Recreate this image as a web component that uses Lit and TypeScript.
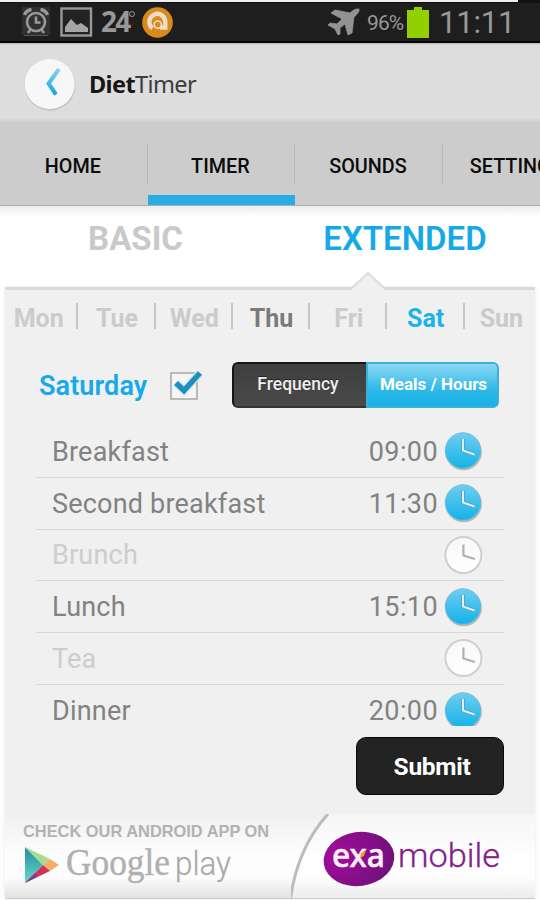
import { LitElement, html, css, svg } from "lit";
import { customElement, property } from "lit/decorators.js";
import { classMap } from "lit/directives/class-map.js";

@customElement("clock-icon")
class ClockIcon extends LitElement {
  @property({ type: Boolean }) on = false;

  static styles = css`
    :host { display: block; width: 42px; height: 42px; }
    svg { display: block; }
  `;

  render() {
    return html`<svg width="42" height="42" viewBox="0 0 42 42" fill="none">
      <defs>
        <linearGradient id="face" x1="0" y1="0" x2="0" y2="1">
          <stop offset="0" stop-color="#70cdf0" />
          <stop offset="1" stop-color="#14b2ea" />
        </linearGradient>
        <linearGradient id="blank" x1="0" y1="0" x2="0" y2="1">
          <stop offset="0" stop-color="#f8f8f8" />
          <stop offset="1" stop-color="#fff" />
        </linearGradient>
      </defs>
      ${this.on
        ? svg`<circle cx="21.6" cy="22" r="18.3" fill="#aaa" opacity=".8" />
            <circle cx="21" cy="20.5" r="17.8" fill="url(#face)" stroke="#6fbcd6" stroke-width=".8" />
            <path d="M21 9V20.5L32.5 24.5" stroke="#4fa9ca" stroke-width="4.2" />
            <path d="M21 9V20.5L32.5 24.5" stroke="#dceff7" stroke-width="2" />`
        : svg`<circle cx="21.4" cy="21" r="18" fill="url(#blank)" stroke="#cfcfcf" stroke-width="2" />
            <path d="M21.4 10.5V21.5L33 25" stroke="#b0b0b0" stroke-width="2.2" />`}
    </svg>`;
  }
}

interface Meal { name: string; time?: string }

const MEALS: Meal[] = [
  { name: "Breakfast", time: "09:00" },
  { name: "Second breakfast", time: "11:30" },
  { name: "Brunch" },
  { name: "Lunch", time: "15:10" },
  { name: "Tea" },
  { name: "Dinner", time: "20:00" },
];
const DAYS = ["Mon", "Tue", "Wed", "Thu", "Fri", "Sat", "Sun"];
const TABS = ["HOME", "TIMER", "SOUNDS", "SETTINGS"];

@customElement("app-root")
class AppRoot extends LitElement {
  static styles = css`
    :host {
      display: flex; flex-direction: column; width: 540px; height: 900px; overflow: hidden;
      background: #fdfdfd; font-family: Roboto, "Liberation Sans", sans-serif; white-space: nowrap;
    }
    * { box-sizing: border-box; }
    svg { display: block; flex: none; }

    .strip { height: 3px; flex: none; background: #111; }
    .strip i { display: block; width: 518px; height: 2px; background: #eee; }
    .status {
      height: 40px; flex: none; display: flex; align-items: center; padding: 0 29px 0 22px;
      background: #1e1e1e; border-bottom: 2px solid #050505; color: #989898;
    }
    .temp {
      display: flex; font: 700 28px/38px "Open Sans", sans-serif; letter-spacing: -1.8px;
      margin: -2px 0 0 8px; width: 41px;
    }
    .temp i { width: 6px; height: 6px; margin: 9px 0 0 0; border: 1.5px solid #989898; border-radius: 50%; }
    .spacer { flex: 1; }
    .percent { font-size: 21px; margin: 1px 3px 0 7px; width: 37px; letter-spacing: -.9px; }
    .time { font-size: 31px; width: 72px; margin-left: 10px; letter-spacing: -.2px; }

    .header {
      height: 79px; flex: none; display: flex; align-items: center; padding: 4px 0 0 23px;
      background: linear-gradient(#b5b5b5, #ddd 2px, #ddd 75px, #cfcfcf);
    }
    .brand { font: 23.5px/30px "Noto Sans", sans-serif; color: #161616; margin: -2px 0 0 13px; letter-spacing: -.6px; }
    .brand span { color: #3c3c3c; }

    .tabs {
      height: 84px; flex: none; display: flex; overflow: hidden; background: #ccc;
      border-bottom: 1px solid #adadad;
    }
    .tab {
      width: 147.6px; flex: none; font-weight: 500; font-size: 19.8px; line-height: 89px; text-align: center;
      color: #0c0c0c; background: linear-gradient(#b9b9b9, #b9b9b9) right 22px / 1px 41px no-repeat;
      padding-right: 2px;
    }
    .tab.on { box-shadow: inset 0 -10px #27ade2; }
    .tab:last-child { text-align: left; padding-left: 27px; }

    .modes {
      height: 81px; flex: none; display: grid; grid-template-columns: 271px 269px; text-align: center;
      background: linear-gradient(#ececec, #fff 10px); font-size: 33px; line-height: 65px;
      font-weight: 700; color: #c9c9c9;
    }
    .mode.on { color: #17a9e6; font-weight: 600; letter-spacing: 0; padding-right: 1px; }

    .panel {
      position: relative; flex: 1; margin: 0 5px 1px; display: flex; flex-direction: column;
      background: #f0f0f0; border-top: 3px solid #dadada; border-bottom: 1px solid #ccc;
      box-shadow: 0 0 3px #e8e8e8;
    }
    .pointer { position: absolute; left: 346px; top: -18px; }

    .days { display: grid; grid-template-columns: repeat(7, 77.3px); margin: 0 -5px; height: 60px; padding: 13px 0 0 1px; }
    .day {
      height: 30px; line-height: 31px; font-size: 25px; font-weight: 700; text-align: center; color: #cbcbcb;
      background: linear-gradient(#c6c6c6, #c6c6c6) right 0 / 2px 26px no-repeat;
    }
    .day:first-child { padding-right: 2px; }
    .day:last-child { background: none; padding-right: 4px; }
    .day.today { color: #7a7a7a; }
    .day.on { color: #1bb3e8; padding-right: 1px; }

    .controls { display: flex; align-items: center; height: 72px; padding-left: 34px; }
    .dayname { font-size: 27px; font-weight: 600; color: #17a9ea; width: 128px; letter-spacing: .1px; }
    .toggle {
      display: flex; width: 267px; height: 46px; margin: -2px 0 0 26px; font-size: 17.5px; font-weight: 500;
      line-height: 40px; text-align: center; color: #eee; border-radius: 5px; text-shadow: 0 -1px #222;
    }
    .seg {
      width: 134px; border: 2px solid #161616; border-bottom-color: #333; border-right: 0; padding-right: 4px;
      border-radius: 6px 0 0 6px; background: linear-gradient(#3e3e3e, #4a4a4a);
    }
    .seg.on {
      width: 133px; padding: 0 0 0 2px; border: 2px solid #39b1db; border-radius: 0 6px 6px 0; color: #fff;
      font-weight: 700; font-size: 17px; background: linear-gradient(#8bd8f3, #2bb7e8 65%, #17b1e6); text-shadow: none;
    }

    .list { margin: 4px 31px 0; height: 312px; }
    .meal {
      display: flex; align-items: center; height: 51.75px; padding: 0 20px 0 16px;
      border-bottom: 1px solid #d8d8d8; color: #828282; font-size: 27px;
    }
    .meal:last-child { border: 0; }
    .meal.off { color: #cdcdcd; }
    .name { flex: 1; letter-spacing: .2px; padding-top: 1px; }
    .clock { margin-left: 4px; height: 42px; overflow: hidden; }
    .meal:last-child .clock { height: 36px; margin-top: -6px; }
    .hour { letter-spacing: .4px; padding-top: 1px; }

    .submit {
      align-self: flex-end; margin: -1px 31px 0 0; width: 148px; height: 58px; border-radius: 10px;
      background: #232323; border: 1px solid #080808; color: #fff; font-weight: 700; font-size: 24.5px;
      line-height: 58px; text-align: center; padding-left: 4px; letter-spacing: -.3px;
    }

    .footer {
      position: relative; display: flex; margin-top: auto; height: 84px;
      background: linear-gradient(#f0f0f0, #fdfdfd 50%, #fdfdfd 75%, #e2e2e2);
    }
    .play { width: 286px; padding: 8px 0 0 18px; }
    .check { font: 700 16.4px/18px "Liberation Sans", sans-serif; color: #b2b2b2; letter-spacing: 0; }
    .store { display: flex; height: 52px; margin-top: 2px; }
  `;

  render() {
    return html`
      <div class="strip"><i></i></div>
      <div class="status">
        <svg width="28" height="30" viewBox="0 0 28 30" fill="none" stroke="#999" stroke-width="2.6">
          <rect width="28" height="28" fill="#303030" stroke="none" />
          <circle cx="14" cy="15" r="9" /><path d="M14 9.5V15.5H18.5M8.5 22.5L6 26M19.5 22.5L22 26" />
          <path d="M2.5 8Q4 3.5 9.5 2.5M18.5 2.5Q24 3.5 25.5 8" stroke-width="3.4" /><path d="M2 28.5H26" stroke="#555" stroke-width="1" />
        </svg>
        <svg width="33" height="30" viewBox="0 0 33 30" style="margin-left:10px">
          <rect x="1.5" y="1.5" width="29.5" height="27" fill="#222" stroke="#999" stroke-width="2.4" />
          <path d="M5 25V20L11 12L17 18L21 16L28 21V25Z" fill="#a5a5a5" />
        </svg>
        <div class="temp">24<i></i></div>
        <svg width="31" height="31" viewBox="0 0 31 31">
          <circle cx="15.5" cy="15.5" r="15.3" fill="#d98a18" />
          <path d="M10.5 21.3A8 8 0 1 1 23.3 15.5V20.5H18" fill="none" stroke="#e9dfca" stroke-width="4.4" />
          <circle cx="15.8" cy="17.6" r="3.6" fill="#d98a18" stroke="#e9dfca" stroke-width="1.6" />
        </svg>
        <div class="spacer"></div>
        <svg width="32" height="28" viewBox="0 0 32 28" fill="#929292">
          <path d="M31 1Q27 0 22 5L7 2L3 5L14 11L9 16L2 15L0 17L7 21L10 27L12 26V20L17 16L20 27L24 25L26 9Q32 4 31 1Z" stroke="#929292" stroke-width=".8" />
        </svg>
        <div class="percent">96%</div>
        <svg width="22" height="31" viewBox="0 0 22 31" fill="#92d000"><path d="M7 0H15V3H22V31H0V3H7Z" /></svg>
        <div class="time">11:11</div>
      </div>

      <div class="header">
        <svg width="53" height="53" viewBox="0 0 53 53">
          <defs>
            <linearGradient id="arrow" x1="0" y1="0" x2="0" y2="1">
              <stop offset="0" stop-color="#84d2ee" /><stop offset="1" stop-color="#19a4dc" />
            </linearGradient>
          </defs>
          <circle cx="27" cy="27.3" r="25.5" fill="#c4c4c4" /><circle cx="26.7" cy="26" r="25" fill="#f7f7f7" />
          <path d="M36 11L25.5 25.5L33 36.5" fill="none" stroke="url(#arrow)" stroke-width="4" />
        </svg>
        <div class="brand"><b>Diet</b><span>Timer</span></div>
      </div>

      <div class="tabs">
        ${TABS.map((t) => html`<div class=${classMap({ tab: true, on: t === "TIMER" })}>${t}</div>`)}
      </div>
      <div class="modes">
        <div class="mode">BASIC</div>
        <div class="mode on">EXTENDED</div>
      </div>

      <div class="panel">
        <svg class="pointer" width="34" height="18" viewBox="0 0 34 18">
          <path d="M1 18V16L17 1L33 16V18Z" fill="#f0f0f0" />
          <path d="M1 16L17 1L33 16" fill="none" stroke="#dcdcdc" stroke-width="2" />
        </svg>
        <div class="days">
          ${DAYS.map((d) => html`<div class=${classMap({ day: true, today: d === "Thu", on: d === "Sat" })}>${d}</div>`)}
        </div>
        <div class="controls">
          <div class="dayname">Saturday</div>
          <svg width="39" height="34" viewBox="0 0 39 34" fill="none">
            <rect x="4" y="4" width="26" height="26" fill="#f5f5f5" stroke="#aaa" stroke-width="1.6" />
            <path d="M9 14L17 21.5L33 4" stroke="#cde8f2" stroke-width="8" />
            <path d="M9 14L17 21.5L33 4" stroke="#218fbe" stroke-width="5.5" />
          </svg>
          <div class="toggle"><div class="seg">Frequency</div><div class="seg on">Meals / Hours</div></div>
        </div>
        <div class="list">
          ${MEALS.map((m) => html`<div class=${classMap({ meal: true, off: !m.time })}>
            <span class="name">${m.name}</span><span class="hour">${m.time ?? ""}</span>
            <div class="clock"><clock-icon ?on=${!!m.time}></clock-icon></div>
          </div>`)}
        </div>
        <div class="submit">Submit</div>
        <div class="footer">
          <div class="play">
            <div class="check">CHECK OUR ANDROID APP ON</div>
            <div class="store">
              <svg width="220" height="52" viewBox="0 0 220 52">
                <defs>
                  <linearGradient id="teal" x1="0" y1="0" x2="0" y2="1">
                    <stop offset="0" stop-color="#248ba4" /><stop offset="1" stop-color="#64dcc4" />
                  </linearGradient>
                </defs>
                <path d="M2 5V41L20 23Z" fill="url(#teal)" />
                <path d="M2 5L27 17L20 23Z" fill="#a4dc90" />
                <path d="M20 23L27 17L36 23L27 29Z" fill="#f6ad64" />
                <path d="M2 41L20 23L27 29Z" fill="#ce3159" /><path d="M2 41L12 31L14 35Z" fill="#7d3b9c" />
                <text x="43" y="33" font-family="Liberation Serif" font-size="37" fill="#b0b0b0" stroke="#b0b0b0" stroke-width=".4" textLength="104" lengthAdjust="spacingAndGlyphs">Google</text>
                <text x="152" y="33" font-family="Roboto" font-weight="300" font-size="34" fill="#aaa" stroke="#aaa" stroke-width=".3" textLength="56" lengthAdjust="spacingAndGlyphs">play</text>
              </svg>
            </div>
          </div>
          <svg width="244" height="84" viewBox="0 0 244 84">
            <defs>
              <radialGradient id="plum" cx=".2" cy=".4" r=".8">
                <stop offset="0" stop-color="#a40c9c" /><stop offset="1" stop-color="#72107c" />
              </radialGradient>
            </defs>
            <path d="M0 84Q4 33 37 0H244V84Z" fill="#fff" opacity=".35" />
            <path d="M-.5 84Q7 33 37 0" fill="none" stroke="#bcbcbc" stroke-width="3" />
            <ellipse cx="68" cy="45" rx="35.5" ry="27" fill="url(#plum)" transform="rotate(-8 68 45)" />
            <text x="41" y="53" font-family="Noto Sans" font-weight="500" font-size="33" fill="#f8f0f8" stroke="#f8f0f8" stroke-width=".5" textLength="53" lengthAdjust="spacingAndGlyphs">exa</text>
            <path d="M70 39L75 36L73 42L69 44Z" fill="#f1a01c" />
            <text x="107" y="53" font-family="Roboto" font-weight="300" font-size="34" fill="#84208c" stroke="#84208c" stroke-width=".3" textLength="102" lengthAdjust="spacingAndGlyphs">mobile</text>
          </svg>
        </div>
      </div>
    `;
  }
}
